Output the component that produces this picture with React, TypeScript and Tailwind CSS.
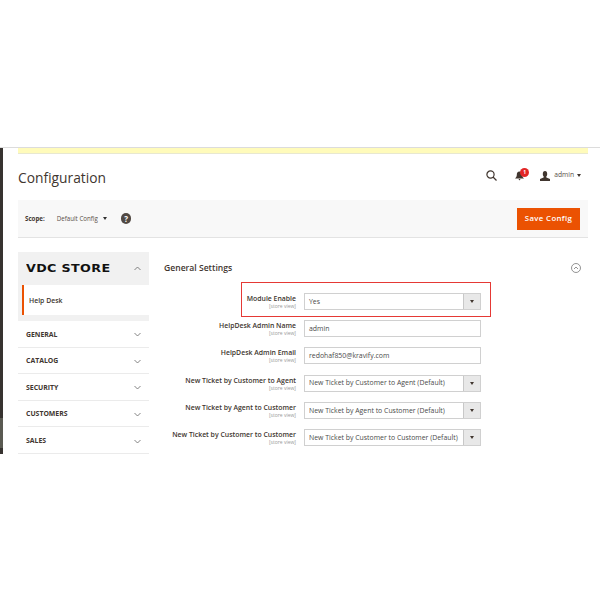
import React from "react";

const font = { fontFamily: '"Open Sans", sans-serif' };

function Chevron({ up = false }: { up?: boolean }) {
  return (
    <svg width="7" height="5" viewBox="0 0 7 5" fill="none" stroke="#666" strokeWidth="0.8" className="block">
      {up ? <path d="M0.5 4 L3.5 1 L6.5 4" /> : <path d="M0.5 1 L3.5 4 L6.5 1" />}
    </svg>
  );
}

function Caret({ color = "#41362f", w = 4 }: { color?: string; w?: number }) {
  return (
    <svg width={w} height="3" viewBox="0 0 4 3" className="block">
      <path d="M0 0 H4 L2 3 Z" fill={color} />
    </svg>
  );
}

function Label({ text }: { text: string }) {
  return (
    <div className="w-[132px] shrink-0 flex flex-col items-end whitespace-nowrap pt-[1px]">
      <div className="text-[6.9px] leading-[9px] font-semibold text-[#41362f]">{text}</div>
      <div className="text-[5px] leading-[6px] text-[#999999]">[store view]</div>
    </div>
  );
}

function Select({ value }: { value: string }) {
  return (
    <div className="w-[177px] h-[17px] flex items-stretch border border-[#d0d0d0] bg-white">
      <div className="flex-1 pl-[4px] pt-[1px] flex items-center text-[6.9px] text-[#4a4a4a] whitespace-nowrap overflow-hidden">{value}</div>
      <div className="w-[17px] bg-[#e8e8e8] border-l border-[#c8c8c8] flex items-center justify-center">
        <Caret />
      </div>
    </div>
  );
}

function Input({ value }: { value: string }) {
  return (
    <div className="w-[177px] h-[17px] flex items-center border border-[#d0d0d0] bg-white pl-[4px] pt-[1px] text-[6.9px] text-[#4a4a4a] whitespace-nowrap">
      {value}
    </div>
  );
}

function Row({ label, children }: { label: string; children: React.ReactNode }) {
  return (
    <div className="h-[27.2px] flex items-start gap-[8px]">
      <Label text={label} />
      {children}
    </div>
  );
}

function NavRow({ text }: { text: string }) {
  return (
    <div className="h-[26.6px] flex items-center justify-between pl-[8px] pr-[8px] pt-[2px] border-b border-[#ebebeb] bg-white">
      <span className="text-[6.9px] font-bold text-[#41362f]">{text}</span>
      <Chevron />
    </div>
  );
}

export default function App() {
  return (
    <div className="w-[600px] h-[600px] bg-white overflow-hidden" style={font}>
      <div className="h-[148px] border-b border-[#dcdcdc]" />
      <div className="h-[306px] flex overflow-hidden">
        <div className="w-[3px] shrink-0 bg-[#373330] flex flex-col justify-end">
          <div className="h-[30px] bg-[#5a5a52] mb-[6px]" />
        </div>
        <div className="flex-1 pl-[15px] pr-[12px]">
          <div className="h-[6px] bg-[#fffbbb] border-b border-[#e8e8d0]" />
          <div className="h-[46px] flex items-center justify-between pr-[7px]">
            <div className="text-[13.8px] text-[#41362f] leading-none pt-[2px]">Configuration</div>
            <div className="flex items-center -mt-[3px]">
              <svg width="11" height="11" viewBox="0 0 11 11" fill="none" stroke="#41362f" strokeWidth="1.2">
                <circle cx="4.5" cy="4.5" r="3.6" />
                <path d="M7 7 L10.5 10.5" />
              </svg>
              <div className="relative ml-[18px] w-[10px] h-[9px]">
                <svg width="9" height="10" viewBox="0 0 9 10" className="block">
                  <path d="M4.5 0.5 C2.5 0.5 1.8 2 1.8 4 C1.8 5.5 1 6.5 0 7.5 H9 C8 6.5 7.2 5.5 7.2 4 C7.2 2 6.5 0.5 4.5 0.5 Z M3.5 8 H5.5 L4.5 9.5 Z" fill="#41362f" />
                </svg>
                <div className="absolute -top-[3px] left-[5px] w-[9px] h-[9px] rounded-full bg-[#e22626] text-white text-[5px] font-bold flex items-center justify-center">1</div>
              </div>
              <svg width="10" height="10" viewBox="0 0 10 10" className="ml-[15px]">
                <path d="M5 0 C6.5 0 7.2 1.2 7.2 3 C7.2 4.4 6.6 5.2 6.2 5.8 L6.4 6.6 L10 8 V10 H0 V8 L3.6 6.6 L3.8 5.8 C3.4 5.2 2.8 4.4 2.8 3 C2.8 1.2 3.5 0 5 0 Z" fill="#41362f" />
              </svg>
              <span className="ml-[4px] text-[6.7px] text-[#5a5048]">admin</span>
              <span className="ml-[3px]"><Caret /></span>
            </div>
          </div>
          <div className="h-[38px] bg-[#f8f8f8] border-b border-[#e3e3e3] flex items-center pl-[7px] pr-[8px]">
            <span className="text-[6.2px] font-bold text-[#41362f]">Scope:</span>
            <span className="ml-[12px] text-[6.2px] text-[#5a5048]">Default Config</span>
            <span className="ml-[5px]"><Caret color="#303030" /></span>
            <div className="ml-[14px] w-[10.5px] h-[10.5px] rounded-full bg-[#514943] text-white text-[8px] font-bold flex items-center justify-center">?</div>
            <div className="ml-auto w-[63px] h-[22px] bg-[#eb5202] text-white text-[7.8px] font-semibold tracking-[0.35px] flex items-center justify-center">Save Config</div>
          </div>
          <div className="flex pt-[14px]">
            <div className="w-[131px] shrink-0">
              <div className="h-[33px] bg-[#f1f1f1] flex items-center justify-between pl-[8px] pr-[8px]">
                <span className="font-['DejaVu_Sans'] text-[10.5px] font-bold text-[#111111] tracking-[0.3px] leading-none scale-x-[1.21] origin-left whitespace-nowrap">VDC STORE</span>
                <Chevron up />
              </div>
              <div className="bg-[#f1f1f1] pl-[4px]">
                <div className="h-[30px] border-l-2 border-[#eb5202] bg-white flex items-center pl-[5px] pt-[3px] text-[6.9px] font-semibold text-[#41362f]">Help Desk</div>
              </div>
              <div className="h-[6px] bg-[#f1f1f1]" />
              <NavRow text="GENERAL" />
              <NavRow text="CATALOG" />
              <NavRow text="SECURITY" />
              <NavRow text="CUSTOMERS" />
              <NavRow text="SALES" />
            </div>
            <div className="flex-1 pl-[15px]">
              <div className="h-[30px] flex items-center justify-between pr-[7px] pt-[2px]">
                <span className="text-[8.6px] font-semibold text-[#41362f]">General Settings</span>
                <svg width="10" height="10" viewBox="0 0 10 10" fill="none" stroke="#666" strokeWidth="0.7">
                  <circle cx="5" cy="5" r="4.5" />
                  <path d="M3 6 L5 4 L7 6" />
                </svg>
              </div>
              <div className="relative pt-[11px]">
                <div className="absolute left-[77px] top-0 w-[250px] h-[35px] border border-[#e53935]" />
                <Row label="Module Enable"><Select value="Yes" /></Row>
                <Row label="HelpDesk Admin Name"><Input value="admin" /></Row>
                <Row label="HelpDesk Admin Email"><Input value="redohaf850@kravify.com" /></Row>
                <Row label="New Ticket by Customer to Agent"><Select value="New Ticket by Customer to Agent (Default)" /></Row>
                <Row label="New Ticket by Agent to Customer"><Select value="New Ticket by Agent to Customer (Default)" /></Row>
                <Row label="New Ticket by Customer to Customer"><Select value="New Ticket by Customer to Customer (Default)" /></Row>
              </div>
            </div>
          </div>
        </div>
      </div>
    </div>
  );
}
